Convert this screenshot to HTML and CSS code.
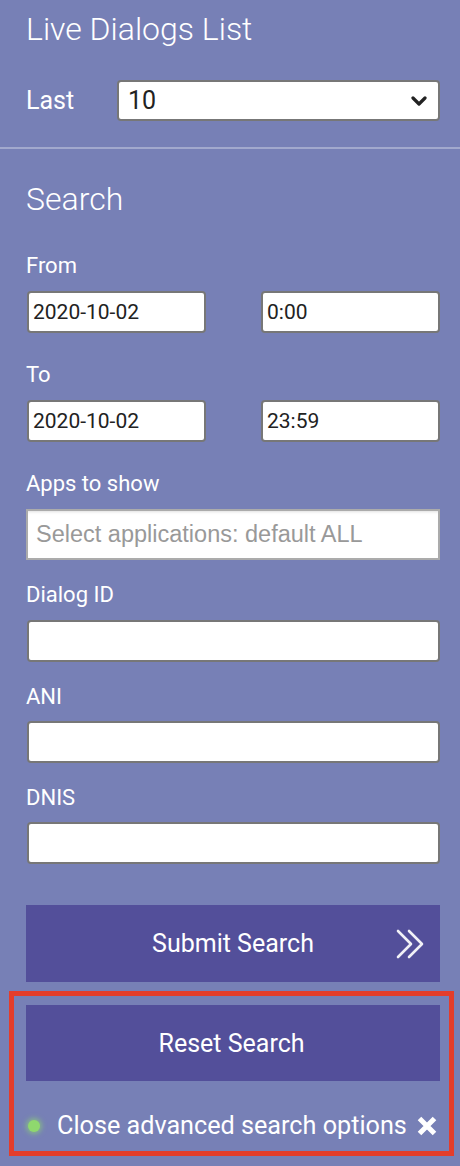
FILE: index.html
```html
<!DOCTYPE html>
<html lang="en">
<head>
<meta charset="utf-8">
<title>Live Dialogs List</title>
<link rel="stylesheet" href="styles.css">
</head>
<body>
<div class="panel">
  <section class="live">
    <h1 class="heading">Live Dialogs List</h1>
    <div class="last-row">
      <label class="last-label">Last</label>
      <div class="select">
        <span class="select-value">10</span>
        <svg class="select-chevron" width="16" height="10" viewBox="0 0 16 10"><path d="M2 2 L8 8 L14 2" fill="none" stroke="#222" stroke-width="3.2" stroke-linecap="round" stroke-linejoin="round"/></svg>
      </div>
    </div>
  </section>
  <div class="sep"></div>
  <section class="search">
    <h2 class="heading heading-search">Search</h2>

    <div class="field field-dates first">
      <div class="label">From</div>
      <div class="pair">
        <input class="input" type="text" value="2020-10-02">
        <input class="input" type="text" value="0:00">
      </div>
    </div>

    <div class="field field-dates">
      <div class="label">To</div>
      <div class="pair">
        <input class="input" type="text" value="2020-10-02">
        <input class="input" type="text" value="23:59">
      </div>
    </div>

    <div class="field">
      <div class="label">Apps to show</div>
      <div class="apps">Select applications: default ALL</div>
    </div>

    <div class="field">
      <div class="label">Dialog ID</div>
      <input class="input full" type="text">
    </div>

    <div class="field field-tight">
      <div class="label">ANI</div>
      <input class="input full" type="text">
    </div>

    <div class="field field-tight">
      <div class="label">DNIS</div>
      <input class="input full" type="text">
    </div>

    <button class="btn btn-submit" type="button">Submit Search
      <svg class="btn-chevrons" width="32" height="30" viewBox="0 0 32 30"><path d="M2 2 L15 15 L2 28" fill="none" stroke="#fff" stroke-width="2.6" stroke-linecap="round" stroke-linejoin="round" opacity="0.92"/><path d="M13 2 L26 15 L13 28" fill="none" stroke="#fff" stroke-width="2.6" stroke-linecap="round" stroke-linejoin="round" opacity="0.92"/></svg>
    </button>

    <div class="highlight">
      <button class="btn btn-reset" type="button">Reset Search</button>
      <div class="close-row">
        <span class="dot"></span>
        <span class="close-text">Close advanced search options</span>
        <svg class="close-x" width="22" height="20" viewBox="0 0 22 20"><path d="M3.5 2.5 L18.5 17.5 M18.5 2.5 L3.5 17.5" stroke="#fff" stroke-width="5" stroke-linecap="butt"/></svg>
      </div>
    </div>
  </section>
</div>
</body>
</html>
```
FILE: styles.css
```css
html, body {
  margin: 0;
  padding: 0;
}
body {
  background: #7780b6;
  font-family: Roboto, "Noto Sans", sans-serif;
  color: #fff;
  width: 460px;
  min-height: 1166px;
}
.panel {
  padding-top: 11px;
}
.live, .search {
  padding: 0 20px 0 26px;
}
.heading {
  margin: 0;
  font-size: 32px;
  line-height: 37px;
  font-weight: 300;
  color: #fff;
}
.heading-search {
  margin-top: 32px;
}
.last-row {
  display: flex;
  align-items: center;
  margin-top: 32px;
}
.last-label {
  width: 91px;
  font-size: 25px;
  font-weight: 400;
  line-height: 30px;
}
.select {
  flex: 1;
  height: 41px;
  box-sizing: border-box;
  background: #fff;
  border: 2px solid #777;
  border-radius: 4px;
  display: flex;
  align-items: center;
  justify-content: space-between;
  padding: 0 11px 0 9px;
  color: #222;
}
.select-value {
  font-size: 25px;
  line-height: 30px;
}
.sep {
  margin-top: 26px;
  height: 2px;
  background: rgba(255, 255, 255, 0.32);
}
.field {
  margin-top: 22px;
}
.field.first {
  margin-top: 35px;
}
.field-dates {
  padding-bottom: 7px;
}
.label {
  font-size: 22px;
  line-height: 25px;
  font-weight: 400;
  color: #fff;
}
.pair {
  display: grid;
  grid-template-columns: 1fr 1fr;
  column-gap: 55px;
  margin-top: 13px;
  padding-left: 1px;
}
.input {
  display: block;
  box-sizing: border-box;
  height: 42px;
  width: 100%;
  margin: 0;
  background: #fff;
  border: 2px solid #777;
  border-radius: 4px;
  padding: 0 4px;
  font-family: Roboto, "Noto Sans", sans-serif;
  font-size: 21px;
  color: #222;
  outline: none;
}
.input.full {
  margin-top: 13px;
  margin-left: 1px;
  width: 413px;
}
.field-tight .input.full {
  margin-top: 12px;
}
.apps {
  margin-top: 13px;
  box-sizing: border-box;
  height: 51px;
  background: #fff;
  border: 2px solid #ababab;
  box-shadow: inset 0 3px 3px -2px rgba(0, 0, 0, 0.12);
  padding: 0 8px;
  display: flex;
  align-items: center;
  font-family: "Liberation Sans", Arial, sans-serif;
  font-size: 23.5px;
  color: #999;
}
.btn {
  display: flex;
  align-items: center;
  justify-content: center;
  position: relative;
  width: 100%;
  border: none;
  margin: 0;
  background: #534f9a;
  color: #fff;
  font-family: Roboto, "Noto Sans", sans-serif;
  font-size: 25px;
  font-weight: 400;
}
.btn-submit {
  margin-top: 41px;
  height: 77px;
}
.btn-chevrons {
  position: absolute;
  right: 12px;
  top: 24px;
}
.highlight {
  margin: 9px -14px 0 -17px;
  border: 5px solid #e43d2b;
  padding: 9px 9px 10px 12px;
}
.btn-reset {
  height: 76px;
  padding-right: 9px;
}
.close-row {
  margin-top: 30px;
  display: flex;
  align-items: center;
  height: 30px;
}
.dot {
  width: 12px;
  height: 12px;
  border-radius: 50%;
  background: #8fd86e;
  box-shadow: 0 0 5px 2px rgba(143, 216, 110, 0.6);
  margin-left: 2px;
  margin-right: 17px;
  flex: none;
}
.close-text {
  font-size: 25.2px;
  line-height: 30px;
  font-weight: 400;
}
.close-x {
  margin-left: 9px;
  flex: none;
}
```
